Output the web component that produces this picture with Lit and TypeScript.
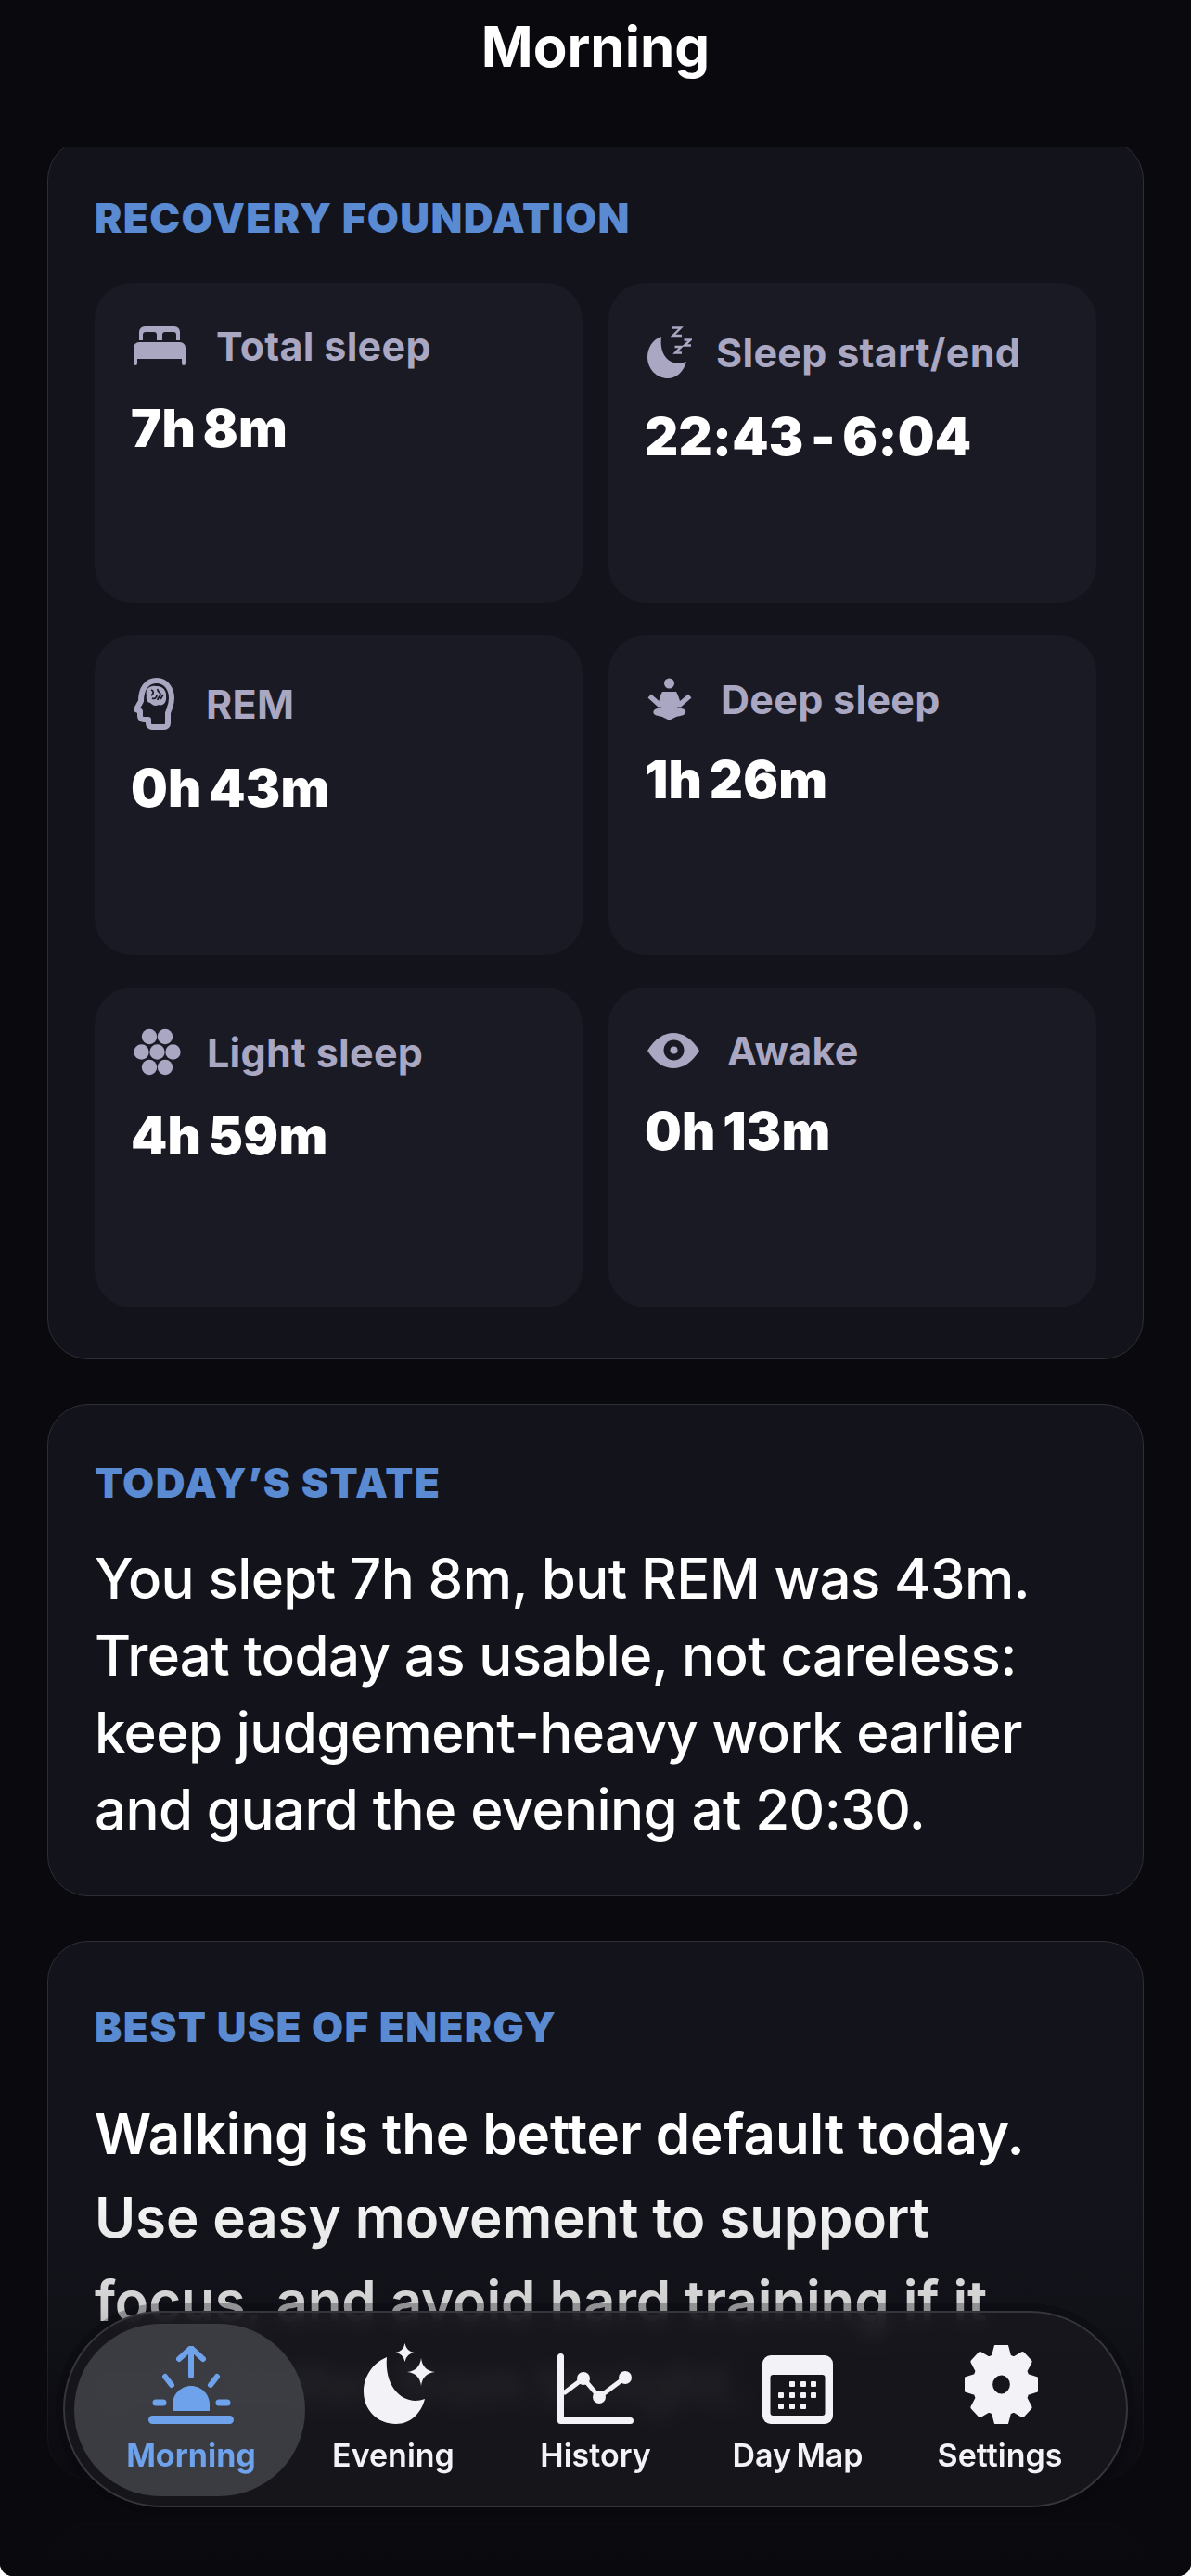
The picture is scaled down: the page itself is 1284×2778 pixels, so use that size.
import { LitElement, html, css, svg } from "lit";
import { customElement, property } from "lit/decorators.js";

const gearPath = () => {
  const cx = 40;
  const cy = 40;
  let d = "";
  for (let i = 0; i < 8; i++) {
    const a = (i * Math.PI) / 4 - Math.PI / 2;
    const pt = (r: number, off: number) =>
      `${(cx + r * Math.cos(a + off)).toFixed(1)} ${(cy + r * Math.sin(a + off)).toFixed(1)}`;
    d += `${i ? "L" : "M"}${pt(28, -0.3)} L${pt(37, -0.15)} L${pt(37, 0.15)} L${pt(28, 0.3)} `;
  }
  return d + "Z";
};

const star = (x: number, y: number, r: number) =>
  `M${x} ${y - r}Q${x + 1.5} ${y - 1.5} ${x + r} ${y}Q${x + 1.5} ${y + 1.5} ${x} ${y + r}Q${x - 1.5} ${y + 1.5} ${x - r} ${y}Q${x - 1.5} ${y - 1.5} ${x} ${y - r}Z`;

const tileIcons: Record<string, any> = {
  bed: html`<svg width="56" height="43" viewBox="0 0 56 43" fill="currentColor">
    <path fill-rule="evenodd" d="M6 16V7a6 6 0 0 1 6-6h32a6 6 0 0 1 6 6v9H46V10a3 3 0 0 0-3-3H34a3 3 0 0 0-3 3v6H25V10a3 3 0 0 0-3-3H13a3 3 0 0 0-3 3v6Z" />
    <path d="M0 24a6 6 0 0 1 6-6h44a6 6 0 0 1 6 6v17a2 2 0 0 1-4 0v-5H4v5a2 2 0 0 1-4 0Z" />
  </svg>`,
  moon: html`<svg width="48" height="57" viewBox="0 0 48 57" fill="currentColor">
    <path d="M15 12C5 15 0 25 0 34C0 47 10 57 22 57C31 57 39 50 42 39C28 45 12 36 15 12Z" />
    <g fill="none" stroke="currentColor" stroke-width="2.4">
      <path d="M27 2.5H36L27.5 11H37" />
      <path d="M39.5 15.5H46.5L40 21.5H47" />
      <path d="M29.5 23H36.5L30 29.5H37" />
    </g>
  </svg>`,
  brain: html`<svg width="44" height="56" viewBox="0 0 44 56" fill="none" stroke="currentColor">
    <path stroke-width="6" stroke-linejoin="round" d="M33 53H20a4 4 0 0 1-4-4v-4h-5a4 4 0 0 1-4-4v-5l-4-2 5-9C8 12 14 3 25 3C35 3 41 12 41 22C41 30 38 34 37 38V49a4 4 0 0 1-4 4Z" />
    <path fill="currentColor" stroke="none" d="M14 19C12 12 18 8 24 9C31 8 36 14 35 20C36 27 31 31 27 29C23 32 19 28 18 27C15 27 13 23 14 19Z" />
    <path stroke="#1a1a25" stroke-width="1.8" d="M19 13c3 1 3 4 0 6M20 22c2 1 5 0 5-3M26 12c-1 3 3 3 3 6c0 2-3 3-3 6M32 18l-3 5" />
  </svg>`,
  meditate: html`<svg width="48" height="45" viewBox="0 0 48 45" fill="currentColor">
    <circle cx="23.500" cy="6" r="5.500" />
    <path d="M16 15H31C33 18 34 22 35 25L44 17.500L47.500 21.500L36 31.500H32L33 34H14L15 31.500H11.500L0.500 21.500L4 17.500L12.500 25C13 22 14 18 16 15Z" />
    <path d="M13 33H34C40 33 42 35 41 38C40 40 36 41 31 42L25 45H22L16 42C11 41 7 40 6.500 38C6 35 8 33 13 33Z" />
  </svg>`,
  cells: html`<svg width="51" height="51" viewBox="0 0 51 51" fill="currentColor">
    <circle cx="17" cy="9" r="8.200" /><circle cx="34" cy="9" r="8.200" />
    <circle cx="8.500" cy="25.500" r="8.200" /><circle cx="25.500" cy="25.500" r="8.200" /><circle cx="42.500" cy="25.500" r="8.200" />
    <circle cx="17" cy="42" r="8.200" /><circle cx="34" cy="42" r="8.200" />
  </svg>`,
  eye: html`<svg width="56" height="40" viewBox="0 0 56 40">
    <path fill="currentColor" d="M0 20C8 7 18 1 28 1C38 1 48 7 56 20C48 33 38 39 28 39C18 39 8 33 0 20Z" />
    <circle cx="28.500" cy="19.500" r="11" fill="#1a1a25" />
    <circle cx="28.500" cy="19.500" r="4" fill="currentColor" />
  </svg>`,
};

const navIcons: Record<string, any> = {
  morning: html`<svg width="92" height="84" viewBox="0 0 92 84" fill="none" stroke="currentColor" stroke-linecap="round">
    <path stroke-width="6" stroke-linejoin="round" d="M46 32V3M33 14L46 2L59 14" />
    <path stroke-width="6" d="M18 33L25 42M74 33L67 42" />
    <path stroke-width="7" d="M8 61H16M76 61H85" />
    <path stroke-width="9" d="M4.500 79.500H87.500" />
    <path stroke="none" fill="currentColor" d="M26 70V63C26 52 35 43 46 43C57 43 66 52 66 63V70Z" />
  </svg>`,
  evening: html`<svg width="77" height="87" viewBox="0 0 77 87" fill="currentColor">
    <path d="M25 15C8 22 0 38 0 52C0 72 15 87 35 87C50 87 62 76 66 60C45 68 22 50 25 15Z" />
    <path d="${star(44.5, 10, 10)}" />
    <path d="${star(62, 31, 15)}" />
  </svg>`,
  history: html`<svg width="82" height="76" viewBox="0 0 82 76" fill="none" stroke="currentColor" stroke-linecap="round" stroke-linejoin="round">
    <path stroke-width="7" d="M3.500 3.500V72.500H78.500" />
    <path stroke-width="5" d="M8 42L28 27L45 47L73 26" />
    <g fill="currentColor" stroke="none">
      <circle cx="28" cy="27" r="7" /><circle cx="45" cy="47" r="7" /><circle cx="73" cy="26" r="7" />
    </g>
  </svg>`,
  daymap: html`<svg width="76" height="74" viewBox="0 0 76 74">
    <defs>
      <mask id="cal">
        <rect width="76" height="74" fill="#fff" />
        <rect x="8.500" y="21" width="59" height="44" rx="3" fill="#000" />
        ${[
          [32, 31], [44, 31], [55, 31],
          [20, 43], [32, 43], [44, 43], [55, 43],
          [20, 55], [32, 55], [44, 55],
        ].map(([x, y]) => svg`<rect x="${x - 3}" y="${y - 3}" width="6" height="6" rx="1" fill="#fff" />`)}
      </mask>
    </defs>
    <rect width="76" height="74" rx="9" fill="currentColor" mask="url(#cal)" />
  </svg>`,
  settings: html`<svg width="79" height="85" viewBox="2 2 76 76" preserveAspectRatio="none" fill="currentColor">
    <path fill-rule="evenodd" stroke="currentColor" stroke-width="4" stroke-linejoin="round" d="${gearPath()} M40 29a11 11 0 1 0 0 22a11 11 0 1 0 0-22Z" />
  </svg>`,
};

@customElement("stat-tile")
class StatTile extends LitElement {
  @property({ type: String }) icon = "";
  @property({ type: String }) label = "";
  @property({ type: String }) value = "";
  @property({ type: Number }) gap = 30;
  @property({ type: Number }) top = 46;
  @property({ type: Number }) drop = 38;

  static styles = css`
    :host {
      display: block;
      height: 345px;
      box-sizing: border-box;
      padding: 0 39px;
      background: #1a1a25;
      border-radius: 40px;
    }
    .head {
      display: flex;
      align-items: center;
      margin-left: 3px;
      color: #a9a7c1;
    }
    .head svg {
      display: block;
      flex: none;
    }
    .label {
      font-size: 43px;
      line-height: 40px;
      font-weight: 700;
      letter-spacing: 0.3px;
    }
    .value {
      font-size: 56px;
      line-height: 56px;
      font-weight: 900;
      word-spacing: -4px;
      letter-spacing: 0.3px;
      color: #fff;
    }
  `;

  render() {
    return html`<div class="head" style="padding-top:${this.top}px">
        ${tileIcons[this.icon]}
        <span class="label" style="margin-left:${this.gap}px">${this.label}</span>
      </div>
      <div class="value" style="margin-top:${this.drop}px">${this.value}</div>`;
  }
}

@customElement("app-root")
export class AppRoot extends LitElement {
  static styles = css`
    :host {
      display: block;
      width: 1284px;
      height: 2778px;
      background: #fff;
      font-family: Inter, "Liberation Sans", sans-serif;
    }
    .page {
      position: relative;
      display: flex;
      flex-direction: column;
      height: 100%;
      overflow: hidden;
      border-radius: 0 0 14px 14px;
      background: #09090e;
      color: #fff;
    }
    .title {
      flex: none;
      height: 158px;
      padding-top: 14px;
      box-sizing: border-box;
      text-align: center;
      font-size: 60px;
      line-height: 72px;
      font-weight: 700;
    }
    .scroll {
      flex: 1;
      min-height: 0;
      overflow: hidden;
      padding: 0 51px;
    }
    .list {
      display: flex;
      flex-direction: column;
      gap: 48px;
      margin-top: -8px;
    }
    .card {
      box-sizing: border-box;
      padding: 66px 50px 55px;
      background: #13131b;
      border: 1px solid #2e2e36;
      border-radius: 44px;
    }
    .card.text {
      padding-bottom: 51px;
    }
    .card.last {
      height: 580px;
      padding-top: 74px;
    }
    .tag {
      font-size: 44px;
      line-height: 36px;
      font-weight: 900;
      letter-spacing: 1.4px;
      color: #5a8bd2;
      text-transform: uppercase;
    }
    .grid {
      display: grid;
      grid-template-columns: 1fr 1fr;
      column-gap: 28px;
      row-gap: 35px;
      margin-top: 52px;
    }
    .body {
      margin: 44px 0 0;
      font-size: 60px;
      line-height: 83px;
      font-weight: 500;
      letter-spacing: -0.6px;
    }
    .body.strong {
      margin-top: 52px;
      line-height: 90px;
      font-weight: 600;
      letter-spacing: -0.1px;
    }
    .fade {
      position: absolute;
      left: 0;
      right: 0;
      bottom: 0;
      height: 430px;
      background: linear-gradient(to bottom, rgba(9, 9, 14, 0), rgba(9, 9, 14, 0.2) 33%, rgba(9, 9, 14, 0.85) 75%, #09090e);
      pointer-events: none;
    }
    .nav {
      position: absolute;
      left: 68px;
      top: 2492px;
      width: 1148px;
      height: 212px;
      box-sizing: border-box;
      padding: 0 27px;
      display: grid;
      grid-template-columns: repeat(5, 218px);
      background: rgba(23, 23, 29, 0.87);
      backdrop-filter: blur(10px);
      border: 2px solid #35353c;
      border-radius: 106px;
      box-shadow: 0 0 0 8px rgba(8, 8, 12, 0.3);
    }
    .tab {
      position: relative;
      height: 100%;
      display: flex;
      flex-direction: column;
      align-items: center;
      justify-content: flex-end;
      padding-bottom: 34px;
      box-sizing: border-box;
      color: #f3f3f7;
      font-size: 34px;
      line-height: 40px;
      font-weight: 600;
      word-spacing: -3px;
    }
    .tab svg {
      display: block;
      margin-bottom: 14px;
    }
    .tab span,
    .tab svg {
      position: relative;
    }
    .tab.evening svg {
      margin-left: 12px;
    }
    .tab.settings svg {
      margin-left: 2px;
    }
    .tab.morning {
      color: #6ea3ec;
      font-weight: 700;
    }
    .tab.morning::before {
      content: "";
      position: absolute;
      left: -17px;
      right: -14px;
      top: 12px;
      bottom: 10px;
      border-radius: 93px;
      background: rgba(66, 66, 74, 0.85);
    }
  `;

  render() {
    const tabs = [
      ["morning", "Morning"],
      ["evening", "Evening"],
      ["history", "History"],
      ["daymap", "Day Map"],
      ["settings", "Settings"],
    ];
    return html`<div class="page">
      <div class="title">Morning</div>
      <div class="scroll">
        <div class="list">
          <section class="card">
            <div class="tag">Recovery foundation</div>
            <div class="grid">
              <stat-tile icon="bed" label="Total sleep" value="7h 8m" .gap=${33} .drop=${40}></stat-tile>
              <stat-tile icon="moon" label="Sleep start/end" value="22:43 - 6:04" .gap=${26} .drop=${35}></stat-tile>
              <stat-tile icon="brain" label="REM" value="0h 43m" .gap=${34} .drop=${35}></stat-tile>
              <stat-tile icon="meditate" label="Deep sleep" value="1h 26m" .gap=${31} .drop=${37}></stat-tile>
              <stat-tile icon="cells" label="Light sleep" value="4h 59m" .gap=${28} .top=${44} .drop=${37}></stat-tile>
              <stat-tile icon="eye" label="Awake" value="0h 13m" .gap=${30} .top=${48} .drop=${39}></stat-tile>
            </div>
          </section>
          <section class="card text">
            <div class="tag">Today’s state</div>
            <p class="body">
              You slept 7h 8m, but REM was 43m.<br />Treat today as usable, not careless:<br />keep judgement-heavy work earlier<br />and guard the evening at 20:30.
            </p>
          </section>
          <section class="card last">
            <div class="tag">Best use of energy</div>
            <p class="body strong">
              Walking is the better default today.<br />Use easy movement to support<br />focus, and avoid hard training if it<br />gets better from tonight.
            </p>
          </section>
          <section class="card"><div style="height:300px"></div></section>
        </div>
      </div>
      <div class="fade"></div>
      <nav class="nav">
        ${tabs.map(
          ([key, name]) => html`<div class="tab ${key}">
            ${navIcons[key]}
            <span>${name}</span>
          </div>`
        )}
      </nav>
    </div>`;
  }
}
